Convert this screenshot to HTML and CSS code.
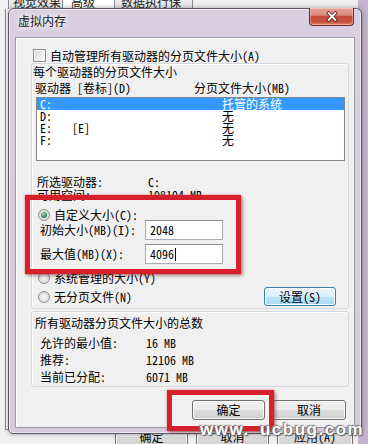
FILE: index.html
```html
<!DOCTYPE html>
<html>
<head>
  <meta charset="utf-8">
  <title>虚拟内存</title>
  <link rel="stylesheet" href="styles.css">
</head>
<body>
  <div class="behind">
    <div class="tabs">
      <div class="tab tab-visual">视觉效果</div>
      <div class="tab tab-adv active">高级</div>
      <div class="tab tab-dep">数据执行保护</div>
    </div>
    <div class="panel"></div>
    <div class="back-buttons">
      <div class="btn back-ok">确定</div>
      <div class="btn back-cancel">取消</div>
      <div class="btn back-apply">应用(A)</div>
    </div>
  </div>

  <div class="dialog">
    <div class="titlebar">
      <span class="title">虚拟内存</span>
      <div class="close">
        <svg width="12" height="11" viewBox="0 0 12 11">
          <path d="M2.5 2 L9.5 9 M9.5 2 L2.5 9" stroke="#5a2020" stroke-width="3.6" stroke-linecap="round"/>
          <path d="M2.5 2 L9.5 9 M9.5 2 L2.5 9" stroke="#ffffff" stroke-width="1.8" stroke-linecap="round"/>
        </svg>
      </div>
    </div>

    <div class="client">
      <div class="check-row"><span class="checkbox"></span>自动管理所有驱动器的分页文件大小(A)</div>

      <div class="group group-drives">
        <div class="group-label">每个驱动器的分页文件大小</div>
        <div class="list-head"><span>驱动器 [卷标](D)</span><span>分页文件大小(MB)</span></div>
        <div class="listbox">
          <div class="list-row selected"><span>C:</span><span></span><span>托管的系统</span></div>
          <div class="list-row"><span>D:</span><span></span><span>无</span></div>
          <div class="list-row"><span>E:</span><span>[E]</span><span>无</span></div>
          <div class="list-row"><span>F:</span><span></span><span>无</span></div>
        </div>
        <div class="info-row first"><span>所选驱动器:</span><span>C:</span></div>
        <div class="info-row"><span>可用空间:</span><span>198104 MB</span></div>
        <div class="radio-row"><span class="radio checked"></span>自定义大小(C):</div>
        <div class="field-row first"><span class="field-label">初始大小(MB)(I):</span><div class="textbox">2048</div></div>
        <div class="field-row"><span class="field-label">最大值(MB)(X):</span><div class="textbox">4096<span class="caret"></span></div></div>
        <div class="radio-row"><span class="radio"></span>系统管理的大小(Y)</div>
        <div class="radio-row last"><span class="radio"></span>无分页文件(N)<div class="btn btn-set">设置(S)</div></div>
      </div>

      <div class="group group-total">
        <div class="group-label">所有驱动器分页文件大小的总数</div>
        <div class="total-row first"><span>允许的最小值:</span><span>16 MB</span></div>
        <div class="total-row"><span>推荐:</span><span>12106 MB</span></div>
        <div class="total-row"><span>当前已分配:</span><span>6071 MB</span></div>
      </div>

      <div class="buttons">
        <div class="btn btn-ok">确定</div>
        <div class="btn btn-cancel">取消</div>
      </div>
    </div>
  </div>

  <div class="mark mark-size"></div>
  <div class="mark mark-ok"></div>
  <div class="watermark">www. ucbug.com</div>
</body>
</html>
```

FILE: styles.css
```css
body {
  margin: 0;
  width: 368px;
  height: 444px;
  overflow: hidden;
  background: linear-gradient(to right, #f0f0f0 358px, #c3b6cc 358px);
  font-family: "Noto Sans Mono CJK SC", "Noto Sans CJK SC", sans-serif;
  font-size: 12px;
  line-height: 12px;
  color: #000;
}

/* window behind the dialog */
.behind {
  height: 444px;
  display: flex;
  flex-direction: column;
}

.tabs {
  height: 9px;
  overflow: hidden;
  display: flex;
  padding-left: 8px;
}

.tab {
  height: 20px;
  margin-top: -9px;
  box-sizing: border-box;
  border: 1px solid #898c95;
  border-left: none;
  background: linear-gradient(#f2f2f2, #e3e3e3);
  padding: 4px 0 0 4px;
  color: #222;
}

.tab-visual { width: 55px; border-left: 1px solid #898c95; }
.tab-adv { width: 52px; padding-left: 8px; }
.tab-dep { width: 78px; padding-left: 6px; }

.tab.active {
  background: #fff;
}

.panel {
  flex: 1;
  margin: 0 10px 0 5px;
  background: #fff;
  border: 1px solid #898c95;
  border-top: none;
}

.back-buttons {
  height: 14px;
  display: flex;
  align-items: flex-start;
  padding-left: 115px;
  gap: 8px;
}

.back-buttons .btn {
  height: 20px;
  margin-top: -3px;
}

.back-ok, .back-cancel { width: 73px; }
.back-apply { width: 76px; }

/* dialog window */
.dialog {
  position: absolute;
  left: 8px;
  top: 8px;
  width: 354px;
  height: 426px;
  box-sizing: border-box;
  border: 1px solid #5b5661;
  border-radius: 6px 6px 5px 5px;
  background: linear-gradient(#dacfe1, #d6cedd 30%, #d3cbd9);
  box-shadow: 0 0 5px rgba(0, 0, 0, 0.35), inset 0 0 0 1px rgba(255, 255, 255, 0.55);
  padding: 0 6px 5px 6px;
  display: flex;
  flex-direction: column;
}

.titlebar {
  height: 28px;
  display: flex;
  justify-content: space-between;
  align-items: flex-start;
  flex-shrink: 0;
}

.title {
  margin: 6px 0 0 3px;
  color: #1a1a1a;
  text-shadow: 0 0 5px #fff, 0 0 8px #fff;
}

.close {
  width: 45px;
  height: 18px;
  margin: -1px 1px 0 0;
  box-sizing: border-box;
  border: 1px solid #6a2a2a;
  border-top: none;
  border-radius: 0 0 4px 4px;
  background: linear-gradient(#e6a59a 0%, #d9877a 42%, #c44a3b 50%, #c9503c 80%, #e2866a 100%);
  box-shadow: inset 0 0 0 1px rgba(255, 220, 210, 0.45);
  display: flex;
  align-items: center;
  justify-content: center;
}

.client {
  flex: 1;
  box-sizing: border-box;
  background: #f0f0f0;
  border: 1px solid #9d98a3;
  box-shadow: inset 1px 1px 0 #fff;
}

.check-row {
  display: flex;
  align-items: center;
  gap: 4px;
  height: 13px;
  margin: 11px 0 0 17px;
}

.checkbox {
  width: 13px;
  height: 13px;
  box-sizing: border-box;
  border: 1px solid #8e8f8f;
  background: linear-gradient(135deg, #d8d8d8, #fbfbfb);
  box-shadow: inset 0 0 0 1px #f4f4f4;
}

/* group boxes */
.group {
  width: 318px;
  box-sizing: border-box;
  margin-left: 15px;
  border: 1px solid #d5d9de;
  border-radius: 3px;
  box-shadow: inset 1px 1px 0 #fff;
}

.group-drives {
  margin-top: 1px;
  padding-bottom: 2px;
}

.group-total {
  margin-top: 2px;
  padding-bottom: 3px;
}

.group-label {
  height: 12px;
  margin: 2px 0 0 1px;
}

.group-total .group-label {
  margin: 5px 0 0 3px;
}

.list-head {
  display: grid;
  grid-template-columns: 159px auto;
  height: 12px;
  margin: 4px 0 0 3px;
}

.listbox {
  width: 309px;
  height: 64px;
  box-sizing: border-box;
  margin: 3px 0 0 4px;
  border: 1px solid #828790;
  background: #fff;
}

.list-row {
  display: grid;
  grid-template-columns: 32px 150px auto;
  height: 12px;
  padding-left: 3px;
}

.list-row.selected {
  background: #3399ff;
  color: #fff;
}

.info-row {
  display: grid;
  grid-template-columns: 111px auto;
  height: 12px;
  margin: 1px 0 0 5px;
}

.info-row.first {
  margin-top: 15px;
}

.radio-row {
  display: flex;
  align-items: center;
  gap: 4px;
  height: 12px;
  margin: 8px 0 0 6px;
}

.radio-row.last {
  height: 19px;
  margin-top: 3px;
}

.radio {
  width: 12px;
  height: 12px;
  box-sizing: border-box;
  border: 1px solid #8e8f8f;
  border-radius: 50%;
  background: radial-gradient(circle at 50% 50%, #f6f6f6 0, #e2e2e2 55%, #cbcbcb 100%);
  display: flex;
  align-items: center;
  justify-content: center;
}

.radio.checked::after {
  content: "";
  width: 6px;
  height: 6px;
  border-radius: 50%;
  background: radial-gradient(circle at 40% 35%, #9fdcbc 0, #3c8a62 55%, #1f5a3e 100%);
}

.field-row {
  display: flex;
  align-items: center;
  height: 20px;
  margin: 4px 0 0 8px;
}

.field-row.first {
  margin-top: -1px;
}

.field-label {
  width: 105px;
}

.textbox {
  width: 78px;
  height: 20px;
  box-sizing: border-box;
  border: 1px solid #abadb3;
  border-top-color: #8e9097;
  background: #fff;
  padding-left: 4px;
  display: flex;
  align-items: center;
}

.caret {
  width: 1px;
  height: 13px;
  background: #000;
  margin-left: 1px;
}

.total-row {
  display: grid;
  grid-template-columns: 106px auto;
  height: 12px;
  margin: 5px 0 0 8px;
}

.total-row.first {
  margin-top: 8px;
}

/* buttons */
.btn {
  box-sizing: border-box;
  border: 1px solid #707070;
  border-radius: 3px;
  background: linear-gradient(#f2f2f2 0%, #ebebeb 50%, #dddddd 50%, #cfcfcf 100%);
  box-shadow: inset 0 0 0 1px #fbfbfb;
  display: flex;
  align-items: center;
  justify-content: center;
  color: #000;
}

.btn-set {
  width: 72px;
  height: 19px;
  margin: 0 12px 0 auto;
  border-color: #3c7fb1;
  background: linear-gradient(#eaf6fd 0%, #d9f0fc 50%, #bee6fd 50%, #a7d9f5 100%);
}

.buttons {
  display: flex;
  justify-content: flex-end;
  gap: 7px;
  margin: 13px 8px 0 0;
}

.buttons .btn {
  height: 20px;
}

.btn-ok { width: 73px; }
.btn-cancel { width: 74px; }

/* red annotation frames */
.mark {
  position: absolute;
  border: 5px solid #d6212c;
  box-shadow: 0 0 2px rgba(214, 33, 44, 0.6), 2px 2px 3px rgba(60, 0, 0, 0.35);
}

.mark-size {
  left: 25px;
  top: 195px;
  width: 206px;
  height: 69px;
}

.mark-ok {
  left: 167px;
  top: 390px;
  width: 97px;
  height: 31px;
}

.watermark {
  position: absolute;
  left: 200px;
  top: 422px;
  font-family: "Liberation Sans", sans-serif;
  font-weight: bold;
  font-size: 17px;
  line-height: 16px;
  letter-spacing: 1.5px;
  word-spacing: 4px;
  color: #fff;
  text-shadow: 0 0 2px #555, 1px 1px 1px #666, -1px -1px 1px #888;
}
```
